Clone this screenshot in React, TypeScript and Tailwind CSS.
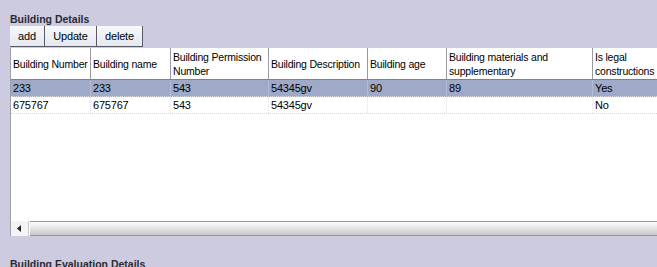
import React from "react";

const columns = [
	{ label: "Building Number", w: "w-[80px]" },
	{ label: "Building name", w: "w-[80px]" },
	{ label: "Building Permission Number", w: "w-[98px]" },
	{ label: "Building Description", w: "w-[99px]" },
	{ label: "Building age", w: "w-[79px]" },
	{ label: "Building materials and supplementary", w: "w-[146px]" },
	{ label: "Is legal constructions", w: "w-[80px]" },
];

const rows = [
	["233", "233", "543", "54345gv", "90", "89", "Yes"],
	["675767", "675767", "543", "54345gv", "", "", "No"],
];

const font = { fontFamily: "Tahoma, 'Liberation Sans', Arial, sans-serif" };

const App: React.FC = () => {
	return (
		<div
			className="w-[657px] h-[267px] overflow-hidden bg-[#cdcbe0] text-[10.5px] tracking-[-0.2px] text-black"
			style={font}
		>
			<div className="pl-[10px] pt-[12px]">
				{/* Section title */}
				<div className="h-[14px] font-bold text-[#2a2a33] leading-[14px] tracking-normal">Building Details</div>

				{/* Toolbar */}
				<div className="flex h-[21px]">
					{["add", "Update", "delete"].map((b, i) => (
						<div
							key={b}
							className={`flex items-center justify-center border-r border-b border-[#5a5a66] bg-gradient-to-b from-[#f6f8fb] to-[#e4e9f0] text-[11px] ${
								i === 0 ? "w-[35px]" : i === 1 ? "w-[52px]" : "w-[46px]"
							}`}
						>
							{b}
						</div>
					))}
				</div>

				{/* Grid */}
				<div className="mt-[1px] h-[188px] flex flex-col bg-white border-l border-[#a0a0a8]">
					<div className="flex-1 overflow-hidden">
						<div className="flex h-[32px] border-b border-[#808088]">
							{columns.map((c) => (
								<div
									key={c.label}
									className={`${c.w} shrink-0 flex items-center px-[2px] border-r border-[#9a9aa2] leading-[14px]`}
								>
									{c.label}
								</div>
							))}
						</div>
						{rows.map((r, ri) => (
							<div
								key={ri}
								className={`flex h-[17px] border-b border-dotted border-[#d8d8e0] ${
									ri === 0 ? "bg-[#9fa9c8]" : "bg-white"
								}`}
							>
								{r.map((cell, ci) => (
									<div
										key={ci}
										className={`${columns[ci].w} shrink-0 px-[2px] leading-[17px] text-[11px] ${
											ri === 0 ? "border-r border-[#b4bcd4]" : "border-r border-dotted border-[#e4e4ea]"
										}`}
									>
										{cell}
									</div>
								))}
							</div>
						))}
					</div>

					{/* Horizontal scrollbar */}
					<div className="flex h-[15px] shrink-0">
						<div className="w-[18px] flex items-center justify-center bg-[#f4f4f6] border-r border-[#c8c8cc]">
							<svg width="5" height="7" viewBox="0 0 5 7">
								<path d="M4 0 L0 3.5 L4 7 Z" fill="#222" />
							</svg>
						</div>
						<div className="flex-1 ml-[1px] border-y border-[#8f9c90] bg-gradient-to-b from-[#fbfbfb] via-[#e4e4e6] to-[#c9c9cc]" />
					</div>
				</div>

				{/* Next section title */}
				<div className="mt-[21px] font-bold text-[#2a2a33] leading-[14px] tracking-normal">Building Evaluation Details</div>
			</div>
		</div>
	);
};

export default App;
